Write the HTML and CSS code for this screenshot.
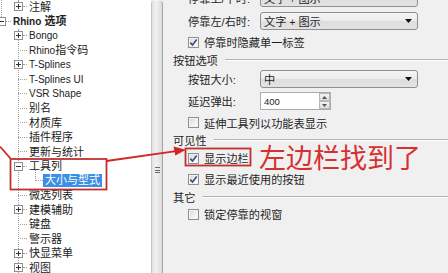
FILE: index.html
```html
<!DOCTYPE html>
<html lang="zh-CN">
<head>
<meta charset="utf-8">
<title>Rhino 选项</title>
<link rel="stylesheet" href="styles.css">
</head>
<body>
<div class="window">
  <div class="tree">
    <div class="group prev">
      <div class="row l1 node"><svg class="tgl" viewBox="0 0 9 9"><rect x=".5" y=".5" width="8" height="8" fill="#fff" stroke="#8f8f8f"/><path d="M2 4.5h5M4.5 2v5" stroke="#333"/></svg><span class="ln s"></span><span class="tx">注解</span></div>
    </div>
    <div class="row root"><svg class="tgl" viewBox="0 0 9 9"><rect x=".5" y=".5" width="8" height="8" fill="#fff" stroke="#8f8f8f"/><path d="M2 4.5h5" stroke="#333"/></svg><span class="ln r"></span><span class="tx b"><span class="lat">Rhino</span> 选项</span></div>
    <div class="group g1">
      <div class="row l1 node"><svg class="tgl" viewBox="0 0 9 9"><rect x=".5" y=".5" width="8" height="8" fill="#fff" stroke="#8f8f8f"/><path d="M2 4.5h5M4.5 2v5" stroke="#333"/></svg><span class="ln s"></span><span class="tx"><span class="lat">Bongo</span></span></div>
      <div class="row l1 leaf"><span class="ln l"></span><span class="tx"><span class="lat">Rhino</span>指令码</span></div>
      <div class="row l1 node"><svg class="tgl" viewBox="0 0 9 9"><rect x=".5" y=".5" width="8" height="8" fill="#fff" stroke="#8f8f8f"/><path d="M2 4.5h5M4.5 2v5" stroke="#333"/></svg><span class="ln s"></span><span class="tx"><span class="lat">T-Splines</span></span></div>
      <div class="row l1 leaf"><span class="ln l"></span><span class="tx"><span class="lat">T-Splines UI</span></span></div>
      <div class="row l1 leaf"><span class="ln l"></span><span class="tx"><span class="lat">VSR Shape</span></span></div>
      <div class="row l1 leaf"><span class="ln l"></span><span class="tx">别名</span></div>
      <div class="row l1 leaf"><span class="ln l"></span><span class="tx">材质库</span></div>
      <div class="row l1 leaf"><span class="ln l"></span><span class="tx">插件程序</span></div>
      <div class="row l1 leaf"><span class="ln l"></span><span class="tx">更新与统计</span></div>
      <div class="row l1 node"><svg class="tgl" viewBox="0 0 9 9"><rect x=".5" y=".5" width="8" height="8" fill="#fff" stroke="#8f8f8f"/><path d="M2 4.5h5" stroke="#333"/></svg><span class="ln s"></span><span class="tx">工具列</span></div>
      <div class="group g2">
        <div class="row l2 leaf"><span class="ln m"></span><span class="tx sel">大小与型式</span></div>
      </div>
      <div class="row l1 leaf"><span class="ln l"></span><span class="tx">微选列表</span></div>
      <div class="row l1 node"><svg class="tgl" viewBox="0 0 9 9"><rect x=".5" y=".5" width="8" height="8" fill="#fff" stroke="#8f8f8f"/><path d="M2 4.5h5M4.5 2v5" stroke="#333"/></svg><span class="ln s"></span><span class="tx">建模辅助</span></div>
      <div class="row l1 leaf"><span class="ln l"></span><span class="tx">键盘</span></div>
      <div class="row l1 leaf"><span class="ln l"></span><span class="tx">警示器</span></div>
      <div class="row l1 node"><svg class="tgl" viewBox="0 0 9 9"><rect x=".5" y=".5" width="8" height="8" fill="#fff" stroke="#8f8f8f"/><path d="M2 4.5h5M4.5 2v5" stroke="#333"/></svg><span class="ln s"></span><span class="tx">快显菜单</span></div>
      <div class="row l1 node"><svg class="tgl" viewBox="0 0 9 9"><rect x=".5" y=".5" width="8" height="8" fill="#fff" stroke="#8f8f8f"/><path d="M2 4.5h5M4.5 2v5" stroke="#333"/></svg><span class="ln s"></span><span class="tx">视图</span></div>
    </div>
  </div>

  <div class="splitter"><span class="grip"></span></div>

  <div class="panel">
    <div class="form">
      <div class="frow"><span class="flabel">停靠上/下时:</span><div class="combo"><span class="cval">文字 <span class="lat">+</span> 图示</span><svg class="dd" viewBox="0 0 7 4"><path d="M0 0h7L3.5 4z" fill="#111"/></svg></div></div>
      <div class="frow m5"><span class="flabel">停靠左/右时:</span><div class="combo"><span class="cval">文字 <span class="lat">+</span> 图示</span><svg class="dd" viewBox="0 0 7 4"><path d="M0 0h7L3.5 4z" fill="#111"/></svg></div></div>
      <div class="crow m3"><span class="cb"><svg viewBox="0 0 11 11"><path d="M2.3 5.6l2.2 2.4 4.2-5.4" fill="none" stroke="#3a4a86" stroke-width="1.6"/></svg></span><span>停靠时隐藏单一标签</span></div>
      <div class="ghead"><span>按钮选项</span></div>
      <div class="frow m1"><span class="flabel">按钮大小:</span><div class="combo"><span class="cval">中</span><svg class="dd" viewBox="0 0 7 4"><path d="M0 0h7L3.5 4z" fill="#111"/></svg></div></div>
      <div class="frow m4"><span class="flabel">延迟弹出:</span><div class="spin"><span class="sval">400</span><div class="sbtns"><span class="sbtn"><svg viewBox="0 0 5 3"><path d="M0 3h5L2.5 0z" fill="#555"/></svg></span><span class="sbtn"><svg viewBox="0 0 5 3"><path d="M0 0h5L2.5 3z" fill="#555"/></svg></span></div></div></div>
      <div class="crow m4 h17"><span class="cb"></span><span>延伸工具列以功能表显示</span></div>
      <div class="ghead"><span>可见性</span></div>
      <div class="crow"><span class="cb"><svg viewBox="0 0 11 11"><path d="M2.3 5.6l2.2 2.4 4.2-5.4" fill="none" stroke="#3a4a86" stroke-width="1.6"/></svg></span><span>显示边栏</span></div>
      <div class="crow m3"><span class="cb"><svg viewBox="0 0 11 11"><path d="M2.3 5.6l2.2 2.4 4.2-5.4" fill="none" stroke="#3a4a86" stroke-width="1.6"/></svg></span><span>显示最近使用的按钮</span></div>
      <div class="ghead h17"><span>其它</span></div>
      <div class="crow"><span class="cb"></span><span>锁定停靠的视窗</span></div>
    </div>
  </div>

  <svg class="annot" viewBox="0 0 448 273" width="448" height="273">
    <path d="M0 146.5L10.5 158.5" stroke="#cc2a2a" stroke-width="1.8" fill="none"/>
    <rect x="10.5" y="159" width="96" height="30.5" fill="none" stroke="#c0302f" stroke-width="1.8"/>
    <path d="M106.5 161L176 151.2" stroke="#d42424" stroke-width="1.8" fill="none"/>
    <path d="M186 149.8L173.5 146.4L175.3 155.6z" fill="#d42424"/>
    <rect x="185.5" y="148.5" width="65" height="17" fill="none" stroke="#c0302f" stroke-width="1.8"/>
  </svg>
  <div class="note">左边栏找到了</div>
</div>
</body>
</html>
```

FILE: styles.css
```css
html, body {
  margin: 0;
  padding: 0;
  width: 448px;
  height: 273px;
  overflow: hidden;
  background: #f0f0f0;
}

.window {
  position: relative;
  display: flex;
  width: 448px;
  height: 273px;
  overflow: hidden;
  font-family: "Liberation Sans", "Noto Sans CJK SC", sans-serif;
  color: #1e1e1e;
}

.lat {
  font-family: "Liberation Sans", sans-serif;
  font-size: 10px;
}

/* ---------- tree ---------- */
.tree {
  width: 151px;
  flex: none;
  background: #fff;
  overflow: hidden;
  font-size: 11px;
  color: #222;
  padding-top: 0;
  margin-top: -0.5px;
}

.group {
  position: relative;
}

.group::before {
  content: "";
  position: absolute;
  left: 18px;
  top: 0;
  bottom: 0;
  border-left: 1px dotted #a0a0a0;
}

.group.prev::before {
  height: 4px;
  bottom: auto;
}

.group.prev::after {
  content: "";
  position: absolute;
  left: 1px;
  top: 0;
  height: 19px;
  border-left: 1px dotted #a0a0a0;
}

.group.g2::before {
  left: 35px;
  top: -4px;
  bottom: auto;
  height: 11px;
}

.row {
  position: relative;
  display: flex;
  align-items: center;
  height: 14.5px;
  white-space: nowrap;
}

.row.root {
  padding-left: 0;
  margin-left: -3px;
}

.row.l1 { padding-left: 14px; }
.row.l1.leaf { padding-left: 18px; }
.row.l2 { padding-left: 35px; }

.tgl {
  width: 9px;
  height: 9px;
  flex: none;
  display: block;
  position: relative;
  z-index: 1;
}

.ln {
  flex: none;
  height: 0;
  border-top: 1px dotted #a0a0a0;
}
.ln.s { width: 4px; }
.ln.r { width: 5px; }
.ln.l { width: 9px; }
.ln.m { width: 8px; }

.tx {
  margin-left: 2px;
  line-height: 14px;
}

.tx.b { font-weight: bold; }

.tx.sel {
  margin-left: 0;
  background: #3b8fe5;
  color: #fff;
  padding: 0 2px;
  height: 13px;
  line-height: 13px;
}

/* ---------- splitter ---------- */
.splitter {
  width: 12px;
  flex: none;
  border-left: 1px solid #c4c4c4;
  border-right: 1px solid #a6a6a6;
  border-radius: 3px 3px 0 0;
  background: linear-gradient(90deg, #e2e2e2, #f1f1f1 40%, #dcdcdc);
  box-shadow: 1px 0 0 #fcfcfc;
  display: flex;
  flex-direction: column;
  align-items: center;
  padding-top: 166px;
  box-sizing: border-box;
  margin-top: 1px;
}

.grip {
  width: 5px;
  height: 6px;
  background: repeating-linear-gradient(180deg, #6a6a6a 0 1px, transparent 1px 2.5px);
}

/* ---------- panel ---------- */
.panel {
  flex: 1;
  background: #f0f0f0;
  padding-left: 10px;
  font-size: 11.2px;
  color: #1e1e1e;
  overflow: hidden;
}

.form {
  margin-top: -11px;
  display: flex;
  flex-direction: column;
}

.frow {
  display: flex;
  align-items: center;
  height: 18px;
  padding-left: 15px;
  white-space: nowrap;
}

.m1 { margin-top: 1px; }
.m3 { margin-top: 3px; }
.m4 { margin-top: 4px; }
.m5 { margin-top: 5px; }
.h17 { height: 17px !important; }

.flabel {
  width: 72px;
  flex: none;
}

.combo {
  width: 158px;
  height: 18px;
  box-sizing: border-box;
  border: 1px solid #8f8f8f;
  border-radius: 3px;
  background: linear-gradient(180deg, #f5f5f5, #ececec 48%, #dedede 52%, #e3e3e3);
  display: flex;
  align-items: center;
  justify-content: space-between;
  padding: 0 5px 0 3px;
}

.dd {
  width: 7px;
  height: 4px;
  display: block;
}

.spin {
  width: 71px;
  height: 18px;
  box-sizing: border-box;
  border: 1px solid #a9acb3;
  background: #fff;
  display: flex;
  align-items: center;
  justify-content: space-between;
}

.sval {
  font-family: "Liberation Sans", sans-serif;
  font-size: 9.5px;
  padding-left: 3px;
}

.sbtns {
  width: 11px;
  height: 16px;
  display: flex;
  flex-direction: column;
}

.sbtn {
  flex: 1;
  box-sizing: border-box;
  border: 1px solid #b8b8b8;
  background: linear-gradient(180deg, #f4f4f4, #dedede);
  display: flex;
  align-items: center;
  justify-content: center;
}

.sbtn svg {
  width: 5px;
  height: 3px;
  display: block;
}

.crow {
  display: flex;
  align-items: center;
  height: 18px;
  padding-left: 15px;
  white-space: nowrap;
}

.cb {
  width: 11px;
  height: 11px;
  flex: none;
  box-sizing: border-box;
  border: 1px solid #8e8f8f;
  background: linear-gradient(135deg, #d6d6d6, #f6f6f6 70%, #fdfdfd);
  box-shadow: inset 0 0 0 1px #f4f4f4;
  margin-right: 5px;
  position: relative;
}

.cb svg {
  position: absolute;
  left: -1px;
  top: -1px;
  width: 11px;
  height: 11px;
}

.ghead {
  display: flex;
  align-items: center;
  height: 18px;
  white-space: nowrap;
}

.ghead::after {
  content: "";
  flex: 1;
  margin-left: 7px;
  border-top: 1px solid #b2b2b2;
  border-bottom: 1px solid #ffffff;
}

/* ---------- annotation overlay ---------- */
.annot {
  position: absolute;
  left: 0;
  top: 0;
  pointer-events: none;
}

.note {
  position: absolute;
  left: 259px;
  top: 143px;
  font-family: "Noto Sans CJK SC", sans-serif;
  font-size: 27px;
  line-height: 27px;
  color: #d63030;
  white-space: nowrap;
}
```
